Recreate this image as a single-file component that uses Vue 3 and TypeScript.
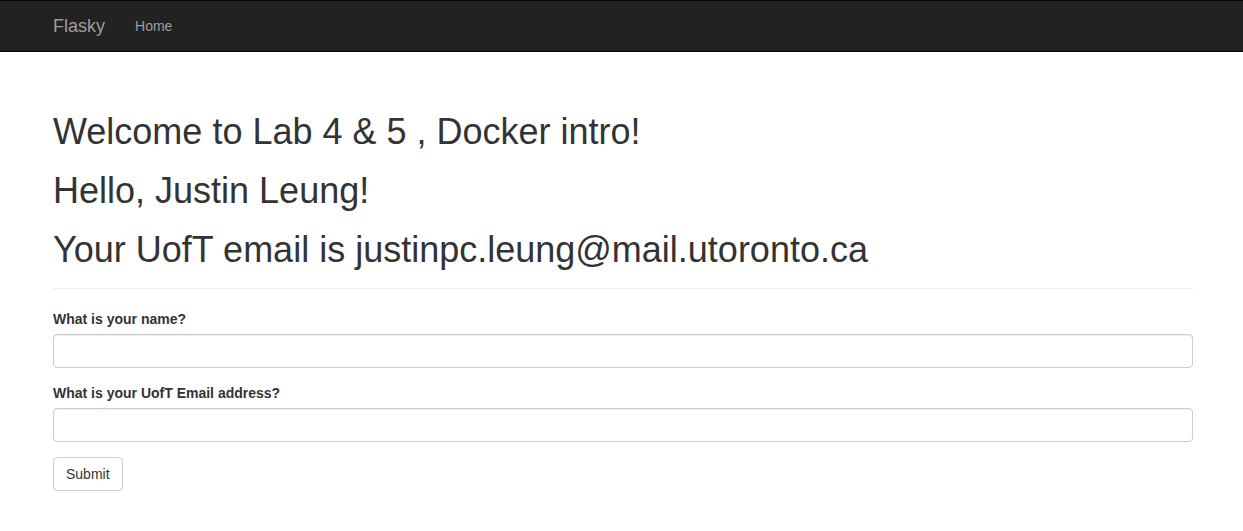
<script setup lang="ts">
import { ref } from 'vue'

const name = ref('')
const email = ref('')
</script>

<template>
  <nav class="navbar">
    <div class="container">
      <a class="brand" href="#">Flasky</a>
      <a class="link" href="#">Home</a>
    </div>
  </nav>
  <main class="container content">
    <header class="page-header">
      <h1>Welcome to Lab 4 &amp; 5 , Docker intro!</h1>
      <h1>Hello, Justin Leung!</h1>
      <h1>Your UofT email is justinpc.leung@mail.utoronto.ca</h1>
    </header>
    <form @submit.prevent>
      <div class="group">
        <label for="name">What is your name?</label>
        <input id="name" v-model="name" type="text" />
      </div>
      <div class="group">
        <label for="email">What is your UofT Email address?</label>
        <input id="email" v-model="email" type="text" />
      </div>
      <button type="submit">Submit</button>
    </form>
  </main>
</template>

<style>
body {
  margin: 0;
  background: #fff;
  color: #333;
  font: 14px/20px "Helvetica Neue", Helvetica, "Liberation Sans", Arial, sans-serif;
}
</style>

<style scoped>
*,
*::before,
*::after {
  box-sizing: border-box;
}
.navbar {
  min-height: 50px;
  border-top: 1px solid #080808;
  border-bottom: 1px solid #080808;
  background: #222;
}
.container {
  max-width: 1171px;
  margin: 0 auto;
  padding: 0 14px 0 17px;
}
.navbar .container {
  display: flex;
}
.brand,
.link {
  padding: 15px;
  line-height: 20px;
  color: #9d9d9d;
  text-decoration: none;
}
.brand {
  margin-left: -15px;
  font-size: 18px;
}
.brand:hover,
.link:hover {
  color: #fff;
}
.page-header {
  margin: 60px 0 20px;
  padding-bottom: 19px;
  border-bottom: 1px solid #eee;
}
h1 {
  margin: 0 0 20px;
  font-size: 36px;
  font-weight: 500;
  line-height: 39px;
}
h1:last-child {
  margin-bottom: 0;
}
.group {
  margin-bottom: 15px;
}
label {
  display: inline-block;
  margin-bottom: 5px;
  font-weight: 700;
}
input {
  display: block;
  width: 100%;
  height: 34px;
  padding: 6px 12px;
  border: 1px solid #ccc;
  border-radius: 4px;
  background: #fff;
  box-shadow: inset 0 1px 1px rgba(0, 0, 0, 0.075);
  color: #555;
  font: inherit;
}
input:focus {
  border-color: #66afe9;
  outline: 0;
}
button {
  padding: 6px 12px;
  border: 1px solid #ccc;
  border-radius: 4px;
  background: #fff;
  color: #333;
  font: inherit;
  cursor: pointer;
}
button:hover {
  background: #e6e6e6;
}
</style>
